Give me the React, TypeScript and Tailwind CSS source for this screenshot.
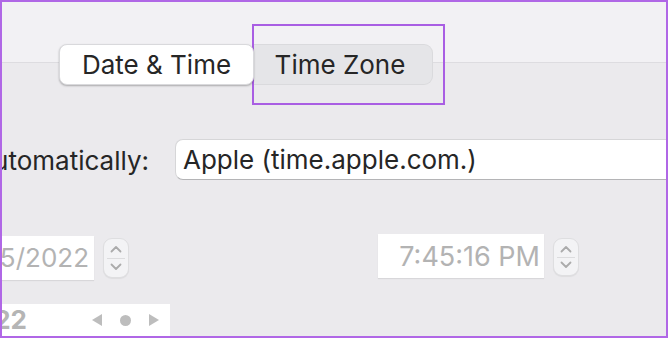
import React from "react";

const Up = () => (
  <svg width="12" height="8" viewBox="0 0 12 8" fill="none">
    <path d="M1.5 6.5 L6 2 L10.5 6.5" stroke="#ababab" strokeWidth="1.8" strokeLinecap="round" strokeLinejoin="round" />
  </svg>
);
const Down = () => (
  <svg width="12" height="8" viewBox="0 0 12 8" fill="none">
    <path d="M1.5 1.5 L6 6 L10.5 1.5" stroke="#ababab" strokeWidth="1.8" strokeLinecap="round" strokeLinejoin="round" />
  </svg>
);

const Stepper = ({ h }: { h: string }) => (
  <div className={`w-[26px] ${h} rounded-[9px] bg-[#f3f3f5] border border-[#dedee0] flex flex-col shadow-[0_1px_1px_rgba(0,0,0,0.06)]`}>
    <div className="flex-1 flex items-center justify-center pt-[2px]"><Up /></div>
    <div className="h-px bg-[#dcdcde] mx-[3px]" />
    <div className="flex-1 flex items-center justify-center pb-[2px]"><Down /></div>
  </div>
);

export default function App() {
  return (
    <div className="relative w-[668px] h-[338px] overflow-hidden bg-[#ebeaed] font-['Inter','Liberation_Sans',sans-serif] text-[#262626]">
      <div className="h-[63px] bg-[#f2f1f4] border-b border-[#dddce0]" />
      <div className="flex ml-[59px] -mt-[19px] h-[41px]">
        <div className="w-[195px] h-[41px] rounded-[8px] bg-white shadow-[0_1px_2px_rgba(0,0,0,0.28)] border border-[#d9d9dc] flex items-center justify-center text-[26px] leading-none z-10">
          Date &amp; Time
        </div>
        <div className="w-[181px] -ml-[2px] h-[41px] rounded-r-[9px] bg-[#e5e5e8] border border-[#dadadd] border-l-0 flex items-center justify-center pr-[4px] text-[26px] leading-none">
          Time Zone
        </div>
      </div>

      <div className="flex items-center mt-[54px] h-[41px]">
        <div className="w-[149px] shrink-0 flex justify-end whitespace-nowrap text-[26px] leading-none pt-[3px]">
          Set date and time automatically:
        </div>
        <div className="ml-[26px] w-[520px] shrink-0 h-[41px] bg-white rounded-l-[8px] border border-[#d6d6d8] border-b-[#b4b4b6] flex items-center pl-[7px] text-[26px] leading-none whitespace-nowrap">
          Apple (time.apple.com.)
        </div>
      </div>

      <div className="flex items-start mt-[54px] h-[46px]">
        <div className="w-[94px] shrink-0 mt-[2px] h-[44px] bg-white shadow-[0_1px_1px_rgba(0,0,0,0.08)] flex items-center justify-end pr-[5px] text-[26px] leading-none text-[#b3b3b3] whitespace-nowrap">
          1/25/2022
        </div>
        <div className="ml-[9px] mt-[4px]"><Stepper h="h-[40px]" /></div>
        <div className="ml-[249px] w-[166px] h-[44px] bg-white shadow-[0_1px_1px_rgba(0,0,0,0.08)] flex items-center justify-end pr-[4px] text-[27px] leading-none text-[#b3b3b3] whitespace-nowrap">
          7:45:16 PM
        </div>
        <div className="ml-[9px] mt-[4px]"><Stepper h="h-[38px]" /></div>
      </div>

      <div className="mt-[24px] w-[170px] h-[40px] bg-white flex items-start">
        <div className="w-[96px] shrink-0 flex justify-end pr-[69px] pt-[3px] text-[26px] font-bold leading-none text-[#b5b5b5] whitespace-nowrap">
          2022
        </div>
        <div className="flex items-center gap-[18px] pt-[10px] -ml-[4px]">
          <svg width="10" height="12" viewBox="0 0 10 12"><path d="M10 0 L0 6 L10 12 Z" fill="#bdbdbd" /></svg>
          <div className="w-[11px] h-[11px] rounded-full bg-[#bdbdbd]" />
          <svg width="10" height="12" viewBox="0 0 10 12"><path d="M0 0 L10 6 L0 12 Z" fill="#bdbdbd" /></svg>
        </div>
      </div>

      <div className="absolute left-[252px] top-[24px] w-[193px] h-[81px] border-2 border-[#a95ee3] pointer-events-none" />
      <div className="absolute inset-0 border-2 border-[#b067e6] pointer-events-none" />
    </div>
  );
}
